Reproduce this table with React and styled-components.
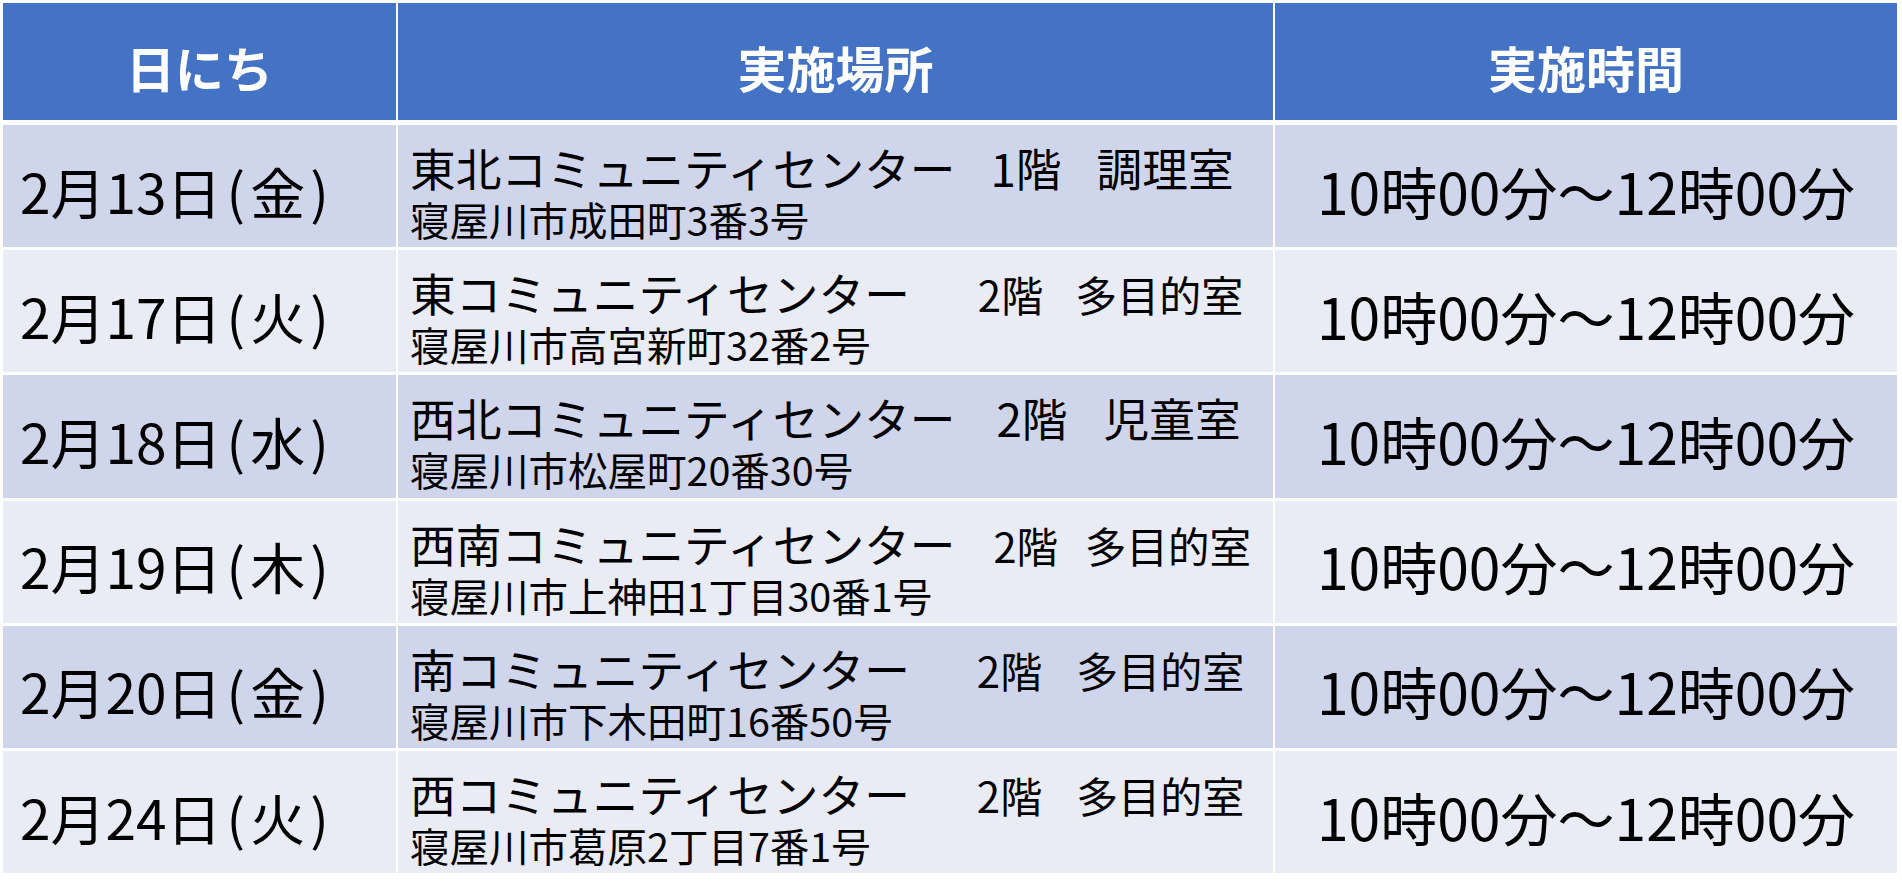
import React from 'react'
import styled, { createGlobalStyle } from 'styled-components'

const GlobalStyle = createGlobalStyle`
  html, body {
    margin: 0;
    padding: 0;
    background: #ffffff;
  }
  body {
    font-family: "Noto Sans CJK JP", "Noto Sans", sans-serif;
    color: #000000;
  }
`

const Page = styled.div`
  padding: 3px 0 0 3px;
  width: 1902px;
  height: 888px;
  box-sizing: border-box;
  background: #ffffff;
`

const Table = styled.div`
  display: grid;
  grid-template-columns: 393px 875px 622px;
  grid-template-rows: 119px repeat(6, 122.2px);
  column-gap: 2px;
  row-gap: 3px;
`

const HeadCell = styled.div`
  background: #4472c4;
  color: #ffffff;
  font-weight: 700;
  font-size: 49px;
  display: flex;
  align-items: center;
  justify-content: center;
  padding-top: 10px;
  box-sizing: border-box;
  margin-bottom: 2px;
`

const Cell = styled.div`
  background: ${p => (p.$odd ? '#cfd5ea' : '#e9ebf5')};
  display: flex;
  align-items: center;
  box-sizing: border-box;
  min-width: 0;
`

const DateCell = styled(Cell)`
  padding: 7px 0 0 17px;
  font-size: 55px;
  white-space: nowrap;
`

const Weekday = styled.span`
  margin-left: 5px;
  letter-spacing: 5px;
`

const PlaceCell = styled(Cell)`
  flex-direction: column;
  align-items: flex-start;
  justify-content: center;
  padding: 14px 0 0 12px;
`

const PlaceLine = styled.div`
  display: flex;
  align-items: baseline;
  height: 52px;
  line-height: 52px;
  white-space: nowrap;
`

const CenterName = styled.span`
  font-size: 45.7px;
`

const Floor = styled.span`
  font-size: ${p => p.$size}px;
  margin-left: ${p => p.$lead}px;
`

const Room = styled.span`
  margin-left: ${p => p.$gap}px;
`

const Address = styled.div`
  font-size: 39.5px;
  height: 52px;
  line-height: 52px;
  white-space: nowrap;
`

const TimeCell = styled(Cell)`
  justify-content: center;
  padding-top: 7px;
  font-size: 57px;
  white-space: nowrap;
`

const rows = [
  { day: '2月13日', week: '(金)', name: '東北コミュニティセンター', level: '1階', room: '調理室', size: 45.7, lead: 35, gap: 35, address: '寝屋川市成田町3番3号' },
  { day: '2月17日', week: '(火)', name: '東コミュニティセンター', level: '2階', room: '多目的室', size: 42, lead: 68, gap: 32, address: '寝屋川市高宮新町32番2号' },
  { day: '2月18日', week: '(水)', name: '西北コミュニティセンター', level: '2階', room: '児童室', size: 45.7, lead: 41, gap: 36, address: '寝屋川市松屋町20番30号' },
  { day: '2月19日', week: '(木)', name: '西南コミュニティセンター', level: '2階', room: '多目的室', size: 41.5, lead: 38, gap: 27, address: '寝屋川市上神田1丁目30番1号' },
  { day: '2月20日', week: '(金)', name: '南コミュニティセンター', level: '2階', room: '多目的室', size: 42, lead: 67, gap: 34, address: '寝屋川市下木田町16番50号' },
  { day: '2月24日', week: '(火)', name: '西コミュニティセンター', level: '2階', room: '多目的室', size: 42, lead: 67, gap: 34, address: '寝屋川市葛原2丁目7番1号' },
]

const App = () => {
  return (
    <Page>
      <GlobalStyle />
      <Table>
        <HeadCell>日にち</HeadCell>
        <HeadCell>実施場所</HeadCell>
        <HeadCell>実施時間</HeadCell>
        {rows.map((r, i) => (
          <React.Fragment key={r.day}>
            <DateCell $odd={i % 2 === 0}>
              {r.day}
              <Weekday>{r.week}</Weekday>
            </DateCell>
            <PlaceCell $odd={i % 2 === 0}>
              <PlaceLine>
                <CenterName>{r.name}</CenterName>
                <Floor $size={r.size} $lead={r.lead}>
                  {r.level}
                  <Room $gap={r.gap}>{r.room}</Room>
                </Floor>
              </PlaceLine>
              <Address>{r.address}</Address>
            </PlaceCell>
            <TimeCell $odd={i % 2 === 0}>10時00分～12時00分</TimeCell>
          </React.Fragment>
        ))}
      </Table>
    </Page>
  )
}

export default App
